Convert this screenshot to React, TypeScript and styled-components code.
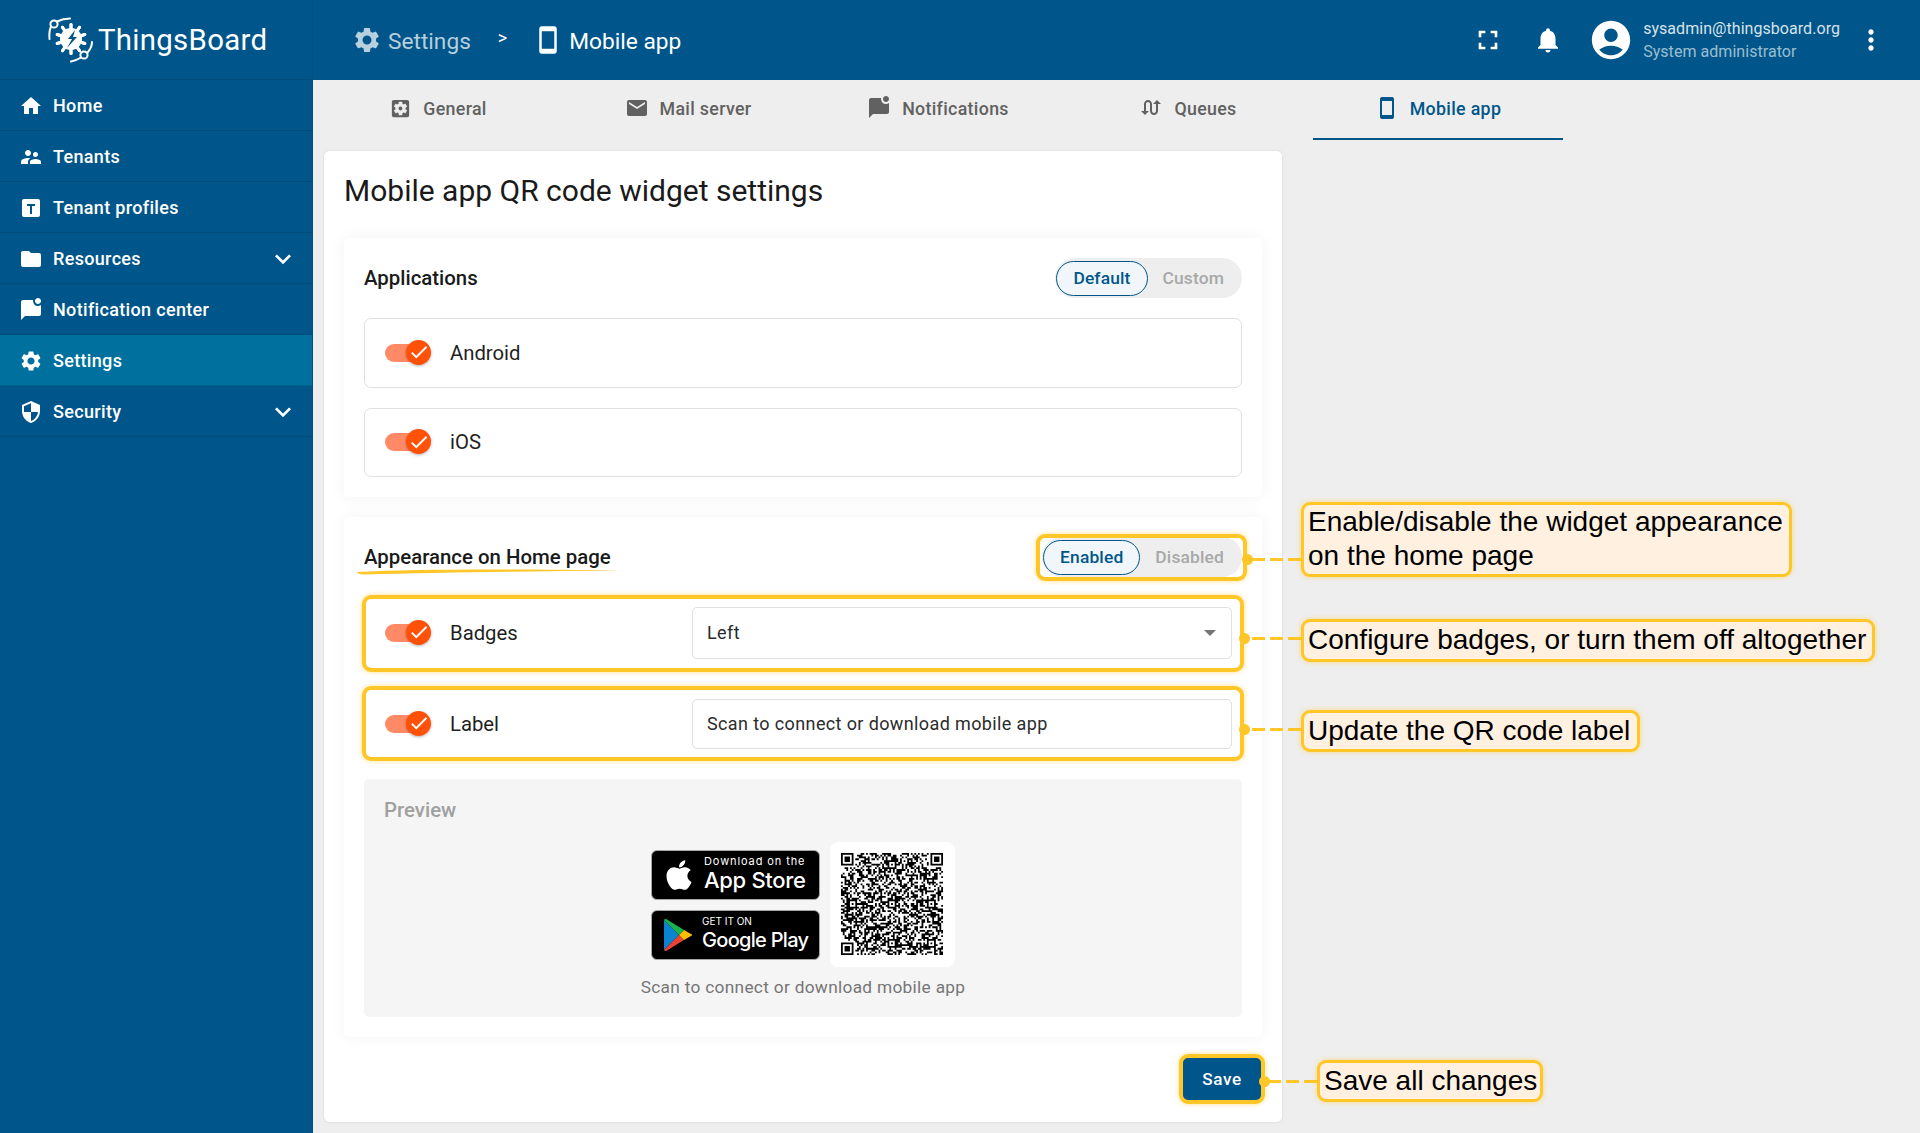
import { useMemo } from "react";
import styled, { createGlobalStyle } from "styled-components";
import { FaApple } from "react-icons/fa";
import {
  MdAccountCircle,
  MdCheck,
  MdExpandMore,
  MdFolder,
  MdFullscreen,
  MdHome,
  MdMail,
  MdMarkChatUnread,
  MdMoreVert,
  MdNotifications,
  MdSecurity,
  MdSettings,
  MdSettingsApplications,
  MdSmartphone,
  MdSupervisorAccount,
  MdSwapCalls,
} from "react-icons/md";
import type { ReactNode } from "react";

const BLUE = "#00568a";
const YELLOW = "#ffc627";

const GlobalStyle = createGlobalStyle`
  html, body {
    margin: 0;
    padding: 0;
    background: #eeeeee;
    overflow: hidden;
  }
  * {
    box-sizing: border-box;
  }
  body {
    font-family: Roboto, "Liberation Sans", sans-serif;
  }
`;

const Page = styled.div`
  position: relative;
  width: 1920px;
  height: 1133px;
  overflow: hidden;
  display: grid;
  grid-template-columns: 313px 1fr;
  grid-template-rows: 80px 1fr;
  background: #eeeeee;
`;

const Brand = styled.div`
  background: ${BLUE};
  display: flex;
  align-items: center;
  gap: 2px;
  padding: 0 0 0 46px;
  border-right: 1px solid rgba(0, 0, 0, 0.06);
  border-bottom: 1px solid rgba(0, 0, 0, 0.12);
`;

const BrandName = styled.span`
  color: #fff;
  font-size: 29.4px;
  font-weight: 400;
  letter-spacing: 0.3px;
`;

const Toolbar = styled.header`
  background: ${BLUE};
  display: flex;
  align-items: center;
  padding: 0 33px 0 39px;
  color: #fff;
`;

const Crumb = styled.div<{ $dim?: boolean }>`
  display: flex;
  align-items: center;
  gap: 6px;
  font-size: 22.7px;
  line-height: 30px;
  padding-top: 4px;
  color: ${(p) => (p.$dim ? "rgba(255,255,255,0.72)" : "#fff")};
`;

const CrumbIcon = styled.span`
  display: flex;
  margin-top: -4px;
`;

const CrumbArrow = styled.span`
  font-size: 18px;
  margin: -6px 26px 0 27px;
`;

const ToolbarRight = styled.div`
  margin-left: auto;
  display: flex;
  align-items: center;
`;

const ToolIcon = styled.span<{ $gap: number }>`
  display: flex;
  margin-right: ${(p) => p.$gap}px;
`;

const UserInfo = styled.div`
  display: flex;
  flex-direction: column;
  gap: 5px;
  margin-right: 15px;
  font-size: 16px;
  line-height: 18px;
  letter-spacing: 0.05px;
`;

const UserMail = styled.span`
  color: rgba(255, 255, 255, 0.85);
`;

const UserRole = styled.span`
  color: rgba(255, 255, 255, 0.62);
`;

const SideNav = styled.nav`
  background: ${BLUE};
  border-right: 1px solid rgba(0, 0, 0, 0.06);
  display: flex;
  flex-direction: column;
`;

const NavItem = styled.div<{ $active?: boolean }>`
  height: 51px;
  flex: none;
  display: flex;
  align-items: center;
  gap: 10px;
  padding: 1px 13px 0 19px;
  color: #fff;
  font-size: 18px;
  font-weight: 500;
  letter-spacing: 0.33px;
  border-bottom: 1px solid rgba(0, 0, 0, 0.13);
  background: ${(p) => (p.$active ? "#00709e" : "transparent")};
`;

const NavArrow = styled.span`
  margin-left: auto;
  display: flex;
`;

const Content = styled.main`
  display: flex;
  flex-direction: column;
  min-width: 0;
`;

const Tabs = styled.div`
  display: flex;
  height: 60px;
  flex: none;
`;

const Tab = styled.div<{ $active?: boolean }>`
  width: 250px;
  display: flex;
  align-items: center;
  justify-content: center;
  gap: 11px;
  padding-bottom: 2px;
  font-size: 17.8px;
  font-weight: 500;
  letter-spacing: 0.33px;
  color: ${(p) => (p.$active ? BLUE : "#616161")};
  border-bottom: 2px solid ${(p) => (p.$active ? BLUE : "transparent")};
`;

const Card = styled.section`
  margin: 11px 0 0 11px;
  width: 958px;
  height: 971px;
  padding: 0 20px;
  background: #fff;
  border-radius: 5px;
  box-shadow: 0 0 2px rgba(0, 0, 0, 0.16);
  display: flex;
  flex-direction: column;
`;

const CardTitle = styled.h1`
  margin: 0;
  height: 87px;
  flex: none;
  display: flex;
  align-items: center;
  padding-bottom: 8px;
  font-size: 30px;
  font-weight: 400;
  color: #1a1a1a;
`;

const Section = styled.div<{ $gap?: number }>`
  padding: 20px;
  margin-bottom: ${(p) => p.$gap ?? 20}px;
  border-radius: 5px;
  background: #fff;
  box-shadow: 0 0 16px rgba(0, 0, 0, 0.05);
  display: flex;
  flex-direction: column;
  gap: 20px;
`;

const SectionHead = styled.div`
  height: 40px;
  display: flex;
  align-items: center;
  justify-content: space-between;
`;

const SectionName = styled.h2`
  margin: 0;
  font-size: 20.4px;
  font-weight: 500;
  color: #1a1a1a;
`;

const Segmented = styled.div`
  height: 40px;
  padding: 2px 18px 2px 1px;
  display: flex;
  align-items: center;
  gap: 15px;
  border-radius: 20px;
  background: #eeeeee;
  font-size: 17.4px;
  font-weight: 500;
  letter-spacing: 0.15px;
`;

const SegmentOn = styled.span`
  height: 35px;
  padding: 0 16px;
  display: flex;
  align-items: center;
  border-radius: 18px;
  color: ${BLUE};
  background: #f1f6fa;
  border: 1px solid ${BLUE};
`;

const SegmentOff = styled.span`
  color: #a8a8a8;
`;

const Row = styled.div<{ $h: number }>`
  height: ${(p) => p.$h}px;
  padding: 0 9px 1px 20px;
  display: flex;
  align-items: center;
  border: 1px solid #e0e0e0;
  border-radius: 7px;
`;

const RowLabel = styled.span`
  margin-left: 19px;
  font-size: 20.3px;
  color: #1f1f1f;
`;

const Switch = styled.span`
  position: relative;
  width: 46px;
  height: 26px;
  flex: none;
  &::before {
    content: "";
    position: absolute;
    left: 0;
    top: 4px;
    width: 38px;
    height: 18px;
    border-radius: 9px;
    background: #ff8a65;
  }
`;

const SwitchKnob = styled.span`
  position: absolute;
  right: 0;
  top: 0;
  width: 25px;
  height: 25px;
  border-radius: 50%;
  background: #ff5108;
  color: #fff;
  display: flex;
  align-items: center;
  justify-content: center;
  box-shadow: 0 1px 3px rgba(0, 0, 0, 0.3);
`;

const Field = styled.div<{ $h: number }>`
  margin-left: auto;
  width: 540px;
  height: ${(p) => p.$h}px;
  padding: 0 14px;
  display: flex;
  align-items: center;
  justify-content: space-between;
  border: 1px solid #e0e0e0;
  border-radius: 5px;
  font-size: 18px;
  letter-spacing: 0.38px;
  color: #2b2b2b;
`;

const Caret = styled.span`
  margin-right: 1px;
  width: 0;
  height: 0;
  border-left: 6px solid transparent;
  border-right: 6px solid transparent;
  border-top: 6px solid #757575;
`;

const Preview = styled.div`
  height: 238px;
  padding: 20px 20px 0;
  border-radius: 5px;
  background: #f5f5f5;
  display: flex;
  flex-direction: column;
  align-items: center;
`;

const PreviewName = styled.div`
  align-self: flex-start;
  height: 23px;
  line-height: 23px;
  font-size: 20.4px;
  font-weight: 500;
  color: #a0a0a0;
`;

const PreviewBody = styled.div`
  margin-top: 20px;
  display: flex;
  gap: 10px;
`;

const StoreList = styled.div`
  display: flex;
  flex-direction: column;
  justify-content: center;
  gap: 10px;
`;

const StoreBadge = styled.div<{ $gap: number; $pad: number }>`
  width: 169px;
  height: 50px;
  padding-left: ${(p) => p.$pad}px;
  display: flex;
  align-items: center;
  gap: ${(p) => p.$gap}px;
  color: #fff;
  background: #000;
  border: 1px solid #a6a6a6;
  border-radius: 6px;
`;

const StoreText = styled.div`
  display: flex;
  flex-direction: column;
  margin-top: -1px;
`;

const StoreSmall = styled.span<{ $size: number; $space: number }>`
  font-family: Inter, Roboto, sans-serif;
  font-size: ${(p) => p.$size}px;
  line-height: 13px;
  letter-spacing: ${(p) => p.$space}px;
  white-space: nowrap;
`;

const StoreBig = styled.span<{ $size: number; $space: number }>`
  font-family: Inter, Roboto, sans-serif;
  font-size: ${(p) => p.$size}px;
  line-height: 25px;
  font-weight: 500;
  letter-spacing: ${(p) => p.$space}px;
  white-space: nowrap;
`;

const QrTile = styled.div`
  width: 125px;
  height: 125px;
  padding: 11px 12px 12px 11px;
  background: #fff;
  border-radius: 8px;
`;

const PreviewCaption = styled.div`
  margin-top: 8px;
  line-height: 24px;
  font-size: 17.3px;
  letter-spacing: 0.3px;
  color: #757575;
`;

const Actions = styled.div`
  display: flex;
  justify-content: flex-end;
`;

const SaveButton = styled.button`
  margin-top: 0;
  width: 80px;
  height: 44px;
  border: 0;
  border-radius: 6px;
  background: ${BLUE};
  color: #fff;
  font: 500 17.1px Roboto, sans-serif;
  letter-spacing: 0.6px;
`;

/* annotation layer painted over the screenshot */
type Place = { $x: number; $y: number; $w?: number; $h?: number };

const Placed = styled.div<Place>`
  position: absolute;
  left: ${(p) => p.$x}px;
  top: ${(p) => p.$y}px;
  ${(p) => (p.$w ? `width: ${p.$w}px;` : "")}
  ${(p) => (p.$h ? `height: ${p.$h}px;` : "")}
`;

const Highlight = styled(Placed)`
  border: 4px solid ${YELLOW};
  border-radius: 9px;
  box-shadow: 0 0 5px rgba(255, 198, 39, 0.55);
`;

const Dot = styled(Placed)`
  width: 11px;
  height: 11px;
  margin: -5.5px 0 0 -5.5px;
  border-radius: 50%;
  background: ${YELLOW};
`;

const Dash = styled(Placed)`
  height: 3px;
  margin-top: -1.5px;
  background: repeating-linear-gradient(to left, ${YELLOW} 0 13px, transparent 13px 18px);
`;

const Callout = styled(Placed)`
  padding: 0 4px 1px 4px;
  display: flex;
  align-items: center;
  border: 3px solid ${YELLOW};
  border-radius: 9px;
  background: #fff0e0;
  box-shadow: 0 0 5px rgba(255, 198, 39, 0.55);
  font-family: "Liberation Sans", Arial, sans-serif;
  font-size: 28px;
  line-height: 34px;
  color: #000;
  white-space: pre;
`;

const Scribble = styled.svg`
  position: absolute;
  left: 357px;
  top: 568px;
`;

const TenantProfileIcon = () => (
  <svg width="24" height="24" viewBox="0 0 24 24" fill="currentColor">
    <path
      fillRule="evenodd"
      d="M5 3h14a2 2 0 0 1 2 2v14a2 2 0 0 1-2 2H5a2 2 0 0 1-2-2V5a2 2 0 0 1 2-2zm3 5v2h3v8h2v-8h3V8H8z"
    />
  </svg>
);

const Logo = () => (
  <svg width="50" height="48" viewBox="0 0 50 48" fill="none" stroke="#fff" strokeLinecap="round">
    <circle cx="8" cy="8" r="3.6" strokeWidth="2" />
    <circle cx="38" cy="39" r="3.6" strokeWidth="2" />
    <path d="M11 5.5C15 3.500 19 2.500 24 2.500M5 10.500C3.500 14 3 18 3.500 23M35 41.500C31 44 28 45 25 45.500M42 36C44.500 33 46 30 46 26" strokeWidth="2" />
    <g strokeWidth="3">
      {[0, 36, 72, 108, 144, 180, 216, 252, 288, 324].map((a) => (
        <line key={a} x1="25" y1="8.500" x2="25" y2="37.500" transform={`rotate(${a} 25 23)`} />
      ))}
    </g>
    <circle cx="25" cy="23" r="11" fill="#fff" stroke="none" />
    <path d="M29 14l-7 9h4l-5 9 10-11h-4z" fill={BLUE} stroke="none" />
  </svg>
);

const PlayLogo = () => (
  <svg width="30" height="34" viewBox="0 0 30 34">
    <path d="M1 2v30l15-15z" fill="#0a84d0" />
    <path d="M1 2l15 15 5-5L4 1.500C2.700 .8 1.500 1 1 2z" fill="#17b34f" />
    <path d="M1 32l15-15 5 5L4 32.500C2.700 33.200 1.500 33 1 32z" fill="#ea4335" />
    <path d="M21 12l7 4c1.500 .8 1.500 1.200 0 2l-7 4-5-5z" fill="#fbbc04" />
  </svg>
);

const QR_SIZE = 57;

// looks like a QR code, the data itself is made up
const QrCode = () => {
  const path = useMemo(() => {
    const n = QR_SIZE;
    let seed = 20231;
    const next = () => {
      seed = (seed * 1103515245 + 12345) & 0x7fffffff;
      return (seed >> 12) % 100;
    };
    const finders = [
      [0, 0],
      [n - 7, 0],
      [0, n - 7],
    ];
    const aligns = [
      [28, 6],
      [6, 28],
      [28, 28],
      [50, 28],
      [28, 50],
      [50, 50],
    ];
    let d = "";
    for (let y = 0; y < n; y++) {
      for (let x = 0; x < n; x++) {
        let on = next() < 50;
        if ((x < 8 && y < 8) || (x >= n - 8 && y < 8) || (x < 8 && y >= n - 8)) on = false;
        for (const [fx, fy] of finders) {
          const dx = x - fx;
          const dy = y - fy;
          if (dx >= 0 && dy >= 0 && dx < 7 && dy < 7) {
            const ring = Math.max(Math.abs(dx - 3), Math.abs(dy - 3));
            on = ring === 3 || ring <= 1;
          }
        }
        for (const [ax, ay] of aligns) {
          const ring = Math.max(Math.abs(x - ax), Math.abs(y - ay));
          if (ring <= 2) on = ring !== 1;
        }
        if (on) d += `M${x} ${y}h1v1h-1z`;
      }
    }
    return d;
  }, []);
  return (
    <svg width="102" height="102" viewBox={`0 0 ${QR_SIZE} ${QR_SIZE}`}>
      <path d={path} fill="#000" />
    </svg>
  );
};

const Toggle = () => (
  <Switch>
    <SwitchKnob>
      <MdCheck size={22} />
    </SwitchKnob>
  </Switch>
);

const navItems: { label: string; icon: ReactNode; arrow?: boolean; active?: boolean }[] = [
  { label: "Home", icon: <MdHome size={24} /> },
  { label: "Tenants", icon: <MdSupervisorAccount size={24} /> },
  { label: "Tenant profiles", icon: <TenantProfileIcon /> },
  { label: "Resources", icon: <MdFolder size={24} />, arrow: true },
  { label: "Notification center", icon: <MdMarkChatUnread size={24} /> },
  { label: "Settings", icon: <MdSettings size={24} />, active: true },
  { label: "Security", icon: <MdSecurity size={24} />, arrow: true },
];

const tabs: { label: string; icon: ReactNode; active?: boolean }[] = [
  { label: "General", icon: <MdSettingsApplications size={23} /> },
  { label: "Mail server", icon: <MdMail size={24} /> },
  { label: "Notifications", icon: <MdMarkChatUnread size={24} /> },
  { label: "Queues", icon: <MdSwapCalls size={24} /> },
  { label: "Mobile app", icon: <MdSmartphone size={24} />, active: true },
];

const highlights = [
  { x: 1036, y: 534, w: 211, h: 47 },
  { x: 362, y: 595, w: 882, h: 77 },
  { x: 362, y: 686, w: 882, h: 75 },
  { x: 1179, y: 1054, w: 86, h: 50 },
];

const links = [
  { dot: 1247, end: 1301, y: 559 },
  { dot: 1244, end: 1301, y: 638 },
  { dot: 1244, end: 1301, y: 729 },
  { dot: 1264, end: 1317, y: 1081 },
];

const callouts = [
  { x: 1301, y: 502, w: 491, h: 75, text: "Enable/disable the widget appearance\non the home page" },
  { x: 1301, y: 619, w: 574, h: 43, text: "Configure badges, or turn them off altogether" },
  { x: 1301, y: 710, w: 339, h: 42, text: "Update the QR code label" },
  { x: 1317, y: 1060, w: 226, h: 42, text: "Save all changes" },
];

export default function App() {
  return (
    <Page>
      <GlobalStyle />
      <Brand>
        <Logo />
        <BrandName>ThingsBoard</BrandName>
      </Brand>
      <Toolbar>
        <Crumb $dim>
          <CrumbIcon>
            <MdSettings size={30} />
          </CrumbIcon>
          Settings
        </Crumb>
        <CrumbArrow>&gt;</CrumbArrow>
        <Crumb>
          <CrumbIcon>
            <MdSmartphone size={30} />
          </CrumbIcon>
          Mobile app
        </Crumb>
        <ToolbarRight>
          <ToolIcon $gap={29}>
            <MdFullscreen size={32} />
          </ToolIcon>
          <ToolIcon $gap={25}>
            <MdNotifications size={30} />
          </ToolIcon>
          <ToolIcon $gap={9}>
            <MdAccountCircle size={46} />
          </ToolIcon>
          <UserInfo>
            <UserMail>sysadmin@thingsboard.org</UserMail>
            <UserRole>System administrator</UserRole>
          </UserInfo>
          <ToolIcon $gap={0}>
            <MdMoreVert size={32} />
          </ToolIcon>
        </ToolbarRight>
      </Toolbar>
      <SideNav>
        {navItems.map((item) => (
          <NavItem key={item.label} $active={item.active}>
            {item.icon}
            {item.label}
            {item.arrow && (
              <NavArrow>
                <MdExpandMore size={32} />
              </NavArrow>
            )}
          </NavItem>
        ))}
      </SideNav>
      <Content>
        <Tabs>
          {tabs.map((tab) => (
            <Tab key={tab.label} $active={tab.active}>
              {tab.icon}
              {tab.label}
            </Tab>
          ))}
        </Tabs>
        <Card>
          <CardTitle>Mobile app QR code widget settings</CardTitle>
          <Section>
            <SectionHead>
              <SectionName>Applications</SectionName>
              <Segmented>
                <SegmentOn>Default</SegmentOn>
                <SegmentOff>Custom</SegmentOff>
              </Segmented>
            </SectionHead>
            <Row $h={70}>
              <Toggle />
              <RowLabel>Android</RowLabel>
            </Row>
            <Row $h={69}>
              <Toggle />
              <RowLabel>iOS</RowLabel>
            </Row>
          </Section>
          <Section>
            <SectionHead>
              <SectionName>Appearance on Home page</SectionName>
              <Segmented>
                <SegmentOn>Enabled</SegmentOn>
                <SegmentOff>Disabled</SegmentOff>
              </Segmented>
            </SectionHead>
            <Row $h={72}>
              <Toggle />
              <RowLabel>Badges</RowLabel>
              <Field $h={52}>
                Left
                <Caret />
              </Field>
            </Row>
            <Row $h={70}>
              <Toggle />
              <RowLabel>Label</RowLabel>
              <Field $h={50}>Scan to connect or download mobile app</Field>
            </Row>
            <Preview>
              <PreviewName>Preview</PreviewName>
              <PreviewBody>
                <StoreList>
                  <StoreBadge $gap={8} $pad={10}>
                    <FaApple size={34} />
                    <StoreText>
                      <StoreSmall $size={11} $space={0.9}>
                        Download on the
                      </StoreSmall>
                      <StoreBig $size={22} $space={-0.3}>
                        App Store
                      </StoreBig>
                    </StoreText>
                  </StoreBadge>
                  <StoreBadge $gap={9} $pad={11}>
                    <PlayLogo />
                    <StoreText>
                      <StoreSmall $size={10} $space={0}>
                        GET IT ON
                      </StoreSmall>
                      <StoreBig $size={20} $space={-0.7}>
                        Google Play
                      </StoreBig>
                    </StoreText>
                  </StoreBadge>
                </StoreList>
                <QrTile>
                  <QrCode />
                </QrTile>
              </PreviewBody>
              <PreviewCaption>Scan to connect or download mobile app</PreviewCaption>
            </Preview>
          </Section>
          <Actions>
            <SaveButton>Save</SaveButton>
          </Actions>
        </Card>
      </Content>

      <Scribble width="264" height="8" viewBox="0 0 264 8">
        <path d="M0 4C60 1 150 1 264 2.500C170 3.500 80 4.500 8 6.500C3 6.500 0 5.500 0 4z" fill={YELLOW} />
      </Scribble>
      {highlights.map((h) => (
        <Highlight key={`${h.x}-${h.y}`} $x={h.x} $y={h.y} $w={h.w} $h={h.h} />
      ))}
      {links.map((l) => (
        <Dash key={`d${l.y}`} $x={l.dot} $y={l.y} $w={l.end - l.dot} />
      ))}
      {links.map((l) => (
        <Dot key={`o${l.y}`} $x={l.dot} $y={l.y} />
      ))}
      {callouts.map((c) => (
        <Callout key={c.text} $x={c.x} $y={c.y} $w={c.w} $h={c.h}>
          {c.text}
        </Callout>
      ))}
    </Page>
  );
}
